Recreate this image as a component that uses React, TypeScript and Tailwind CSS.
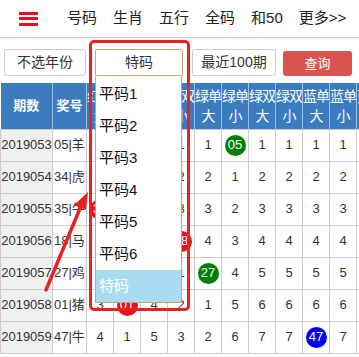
import React from 'react';

const navItems = ['号码', '生肖', '五行', '全码', '和50', '更多>>'];

const cols = [
  ['红单', '大'], ['红单', '小'], ['红双', '大'], ['红双', '小'],
  ['绿单', '大'], ['绿单', '小'], ['绿双', '大'], ['绿双', '小'],
  ['蓝单', '大'], ['蓝单', '小'], ['蓝双', '大'], ['蓝双', '小'],
];

type Cell = number | { ball: string; color: string };

const g = (n: string) => ({ ball: n, color: 'bg-[#008000]' });
const r = (n: string) => ({ ball: n, color: 'bg-[#e8101a]' });
const b = (n: string) => ({ ball: n, color: 'bg-[#0000ff]' });

const rows: { issue: string; code: string; cells: Cell[] }[] = [
  { issue: '2019053', code: '05|羊', cells: [1, 1, 1, 1, 1, g('05'), 1, 1, 1, 1, 1, 1] },
  { issue: '2019054', code: '34|虎', cells: [2, 2, r('34'), 2, 2, 1, 2, 2, 2, 2, 2, 2] },
  { issue: '2019055', code: '35|牛', cells: [r('35'), 3, 1, 3, 3, 2, 3, 3, 3, 3, 3, 3] },
  { issue: '2019056', code: '18|马', cells: [1, 4, 2, r('18'), 4, 3, 4, 4, 4, 4, 4, 4] },
  { issue: '2019057', code: '27|鸡', cells: [2, 5, 3, 1, g('27'), 4, 5, 5, 5, 5, 5, 5] },
  { issue: '2019058', code: '01|猪', cells: [3, r('01'), 4, 2, 1, 5, 6, 6, 6, 6, 6, 6] },
  { issue: '2019059', code: '47|牛', cells: [4, 1, 5, 3, 2, 6, 7, 7, b('47'), 7, 7, 7] },
];

const options = ['平码1', '平码2', '平码3', '平码4', '平码5', '平码6'];

export default function App() {
  return (
    <div
      className="relative w-[359px] h-[357px] overflow-hidden bg-white text-[#333]"
      style={{ fontFamily: '"Liberation Sans", "Noto Sans CJK SC", sans-serif' }}
    >
      {/* top nav */}
      <div className="flex items-center h-[38px] border-b border-[#cfcfcf] shadow-[0_1px_2px_rgba(0,0,0,0.08)]">
        <div className="flex flex-col justify-between w-[19px] h-[14px] ml-[19px] mr-[29px]">
          <span className="h-[3px] bg-[#e8101a]" />
          <span className="h-[3px] bg-[#e8101a]" />
          <span className="h-[3px] bg-[#e8101a]" />
        </div>
        <div className="flex gap-[16px] text-[15px] text-[#222]">
          {navItems.map((t) => (
            <span key={t}>{t}</span>
          ))}
        </div>
      </div>

      {/* filters */}
      <div className="flex items-center h-[45px] pl-[4px] pt-[4px]">
        <div className="flex items-center justify-center w-[82px] h-[27px] border border-[#ccc] rounded-[3px] text-[14px]">
          不选年份
        </div>
        <div className="relative ml-[9px] z-20">
          <div className="flex items-center justify-center w-[88px] h-[27px] border border-[#c8a468] rounded-[2px] text-[14px] bg-white">
            特码
          </div>
          <div className="absolute left-0 top-[27px] w-[87px] bg-white border-x border-b border-[#c8a468] pt-[2px] text-[15px] text-[#111]">
            {options.map((o) => (
              <div key={o} className="flex items-center h-[32px] pl-[3px]">
                {o}
              </div>
            ))}
            <div className="flex items-center h-[32px] pl-[3px] bg-[#a9dcf2] text-white">特码</div>
          </div>
        </div>
        <div className="flex items-center justify-center ml-[9px] w-[84px] h-[27px] border border-[#ccc] rounded-[3px] text-[14px]">
          最近100期
        </div>
        <div className="flex items-center justify-center ml-[7px] mt-[2px] w-[69px] h-[25px] rounded-[3px] bg-[#d9534f] text-white text-[13px]">
          查询
        </div>
      </div>

      {/* table */}
      <table className="table-fixed border-collapse w-[410px] text-[13px]">
        <colgroup>
          <col className="w-[52px]" />
          <col className="w-[34px]" />
          {cols.map((_, i) => (
            <col key={i} className="w-[27px]" />
          ))}
        </colgroup>
        <thead>
          <tr className="h-[46px] bg-[#3b7cc1] text-white">
            <th className="border-r border-[#9fbfe0] font-bold text-[13px]">期数</th>
            <th className="border-r border-[#9fbfe0] font-bold text-[13px]">奖号</th>
            {cols.map(([a, c], i) => (
              <th key={i} className="border-r border-[#9fbfe0] font-normal text-[14px] leading-[20px] tracking-[-1px]">
                {a}
                <br />
                {c}
              </th>
            ))}
          </tr>
        </thead>
        <tbody>
          {rows.map((row) => (
            <tr key={row.issue} className="h-[32px]">
              <td className="border border-[#ccc] bg-[#efefef] text-center px-0 text-[13px]">{row.issue}</td>
              <td className="border border-[#ccc] text-left pl-[1px] whitespace-nowrap text-[13px]">{row.code}</td>
              {row.cells.map((c, i) => (
                <td key={i} className="border border-[#ccc] text-center">
                  {typeof c === 'number' ? (
                    c
                  ) : (
                    <span className={`inline-flex items-center justify-center w-[21px] h-[21px] rounded-full text-white text-[13px] ${c.color}`}>
                      {c.ball}
                    </span>
                  )}
                </td>
              ))}
            </tr>
          ))}
        </tbody>
      </table>

      {/* annotation: red frame */}
      <div className="absolute left-[89px] top-[40px] w-[101px] h-[271px] border-[3px] border-[#e8231f] rounded-[5px] z-30" />

      {/* annotation: arrow */}
      <svg className="absolute left-0 top-0 z-30" width="359" height="357" viewBox="0 0 359 357">
        <line x1="46" y1="290" x2="81" y2="206" stroke="#e8231f" strokeWidth="3.5" strokeLinecap="round" />
        <polygon points="88,192 74,205 86,210" fill="#e8231f" />
      </svg>
    </div>
  );
}
